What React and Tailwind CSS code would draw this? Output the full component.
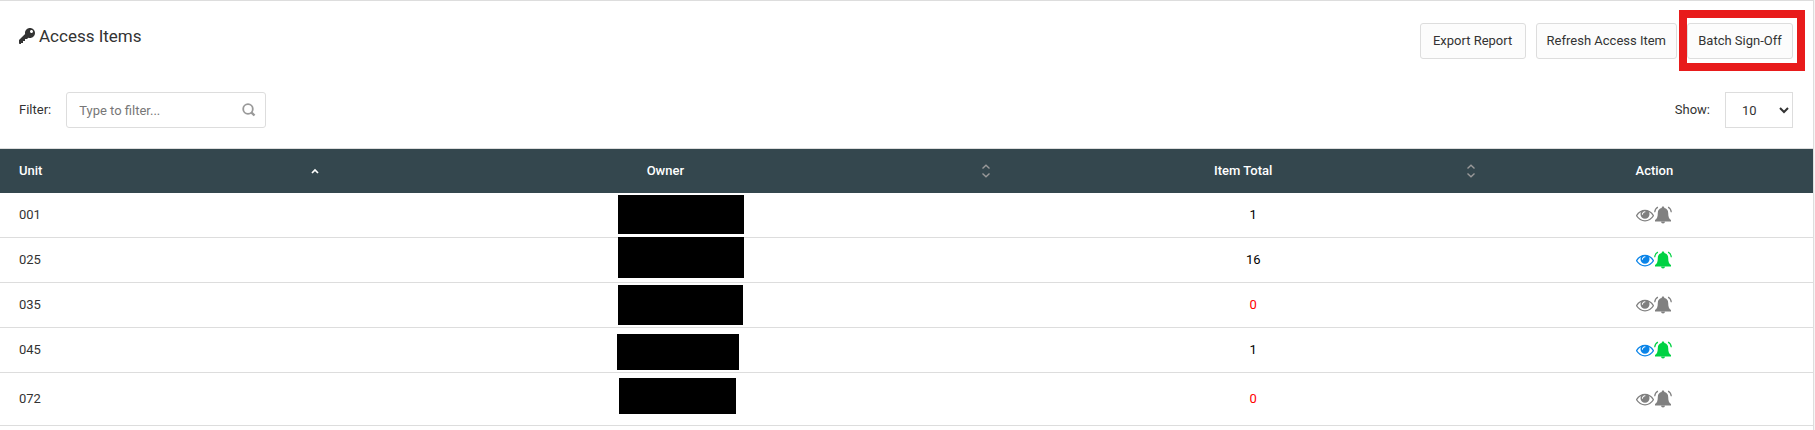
import { useState } from 'react';
import { ImKey } from 'react-icons/im';

// mask: size and position of the bar that hides the owner's name
const ROWS = [
  { unit: '001', total: 1, height: 'h-[45px]', active: false, mask: 'left-[278px] top-[2px] w-[126px] h-[39px]' },
  { unit: '025', total: 16, height: 'h-[45px]', active: true, mask: 'left-[278px] top-[-1px] w-[126px] h-[41px]' },
  { unit: '035', total: 0, height: 'h-[45px]', active: false, mask: 'left-[278px] top-[2px] w-[125px] h-[40px]' },
  { unit: '045', total: 1, height: 'h-[45px]', active: true, mask: 'left-[277px] top-[6px] w-[122px] h-[36px]' },
  { unit: '072', total: 0, height: 'h-[53px]', active: false, mask: 'left-[279px] top-[5px] w-[117px] h-[36px]' },
];

function SearchIcon() {
  return (
    <svg viewBox="0 0 14 14" className="absolute right-[10px] top-[11px] h-[14px] w-[14px] text-[#999999]" fill="none" stroke="currentColor" aria-hidden="true">
      <circle cx="6" cy="6" r="4.8" strokeWidth="1.8" />
      <path d="M9.3 9.3L12.5 12.5" strokeWidth="2.4" />
    </svg>
  );
}

function EyeIcon() {
  return (
    <svg viewBox="0 0 1792 1792" className="h-[18px] w-[18px]" fill="currentColor" aria-hidden="true">
      <path d="M1664 960q-152-236-381-353 61 104 61 225 0 185-131.5 316.5t-316.5 131.5-316.5-131.5-131.5-316.5q0-121 61-225-229 117-381 353 133 205 333.5 326.5t434.5 121.5 434.5-121.5 333.5-326.5zm-720-384q0-20-14-34t-34-14q-125 0-214.5 89.5t-89.5 214.5q0 20 14 34t34 14 34-14 14-34q0-86 61-147t147-61q20 0 34-14t14-34zm848 384q0 34-20 69-140 230-376.5 368.5t-499.5 138.5-499.5-139-376.5-368q-20-35-20-69t20-69q140-229 376.5-368t499.5-139 499.5 139 376.5 368q20 35 20 69z" />
    </svg>
  );
}

function BellIcon() {
  return (
    <svg viewBox="0 0 18 18" className="h-[18px] w-[18px]" fill="currentColor" aria-hidden="true">
      <path d="M9 .5c.8 0 1.300.5 1.300 1.200v.3c2.500.5 3.900 2.300 3.900 4.900 0 4 .8 5.800 2.800 7.100v1.500H1V14c2-1.300 2.800-3.100 2.800-7.100 0-2.600 1.400-4.400 3.900-4.900v-.3C7.700 1 8.200.5 9 .5z" />
      <path d="M7 15.500h4a2 2 0 0 1-4 0z" />
      <path d="M3.900 1.100C2.100 2 .9 3.900.7 6.200M14.100 1.100c1.800.9 3 2.800 3.200 5.100" fill="none" stroke="currentColor" strokeWidth="1.200" />
    </svg>
  );
}

function SortIcon({ sorted }) {
  return (
    <svg viewBox="0 0 16 16" className="absolute right-[17px] top-[14px] h-4 w-4" fill="none" aria-hidden="true">
      {sorted ? (
        <path d="M5 10l3-3 3 3" stroke="#ffffff" strokeWidth="1.7" />
      ) : (
        <path d="M4.500 5.500L8 2.300l3.500 3.200M4.500 10.500L8 13.700l3.500-3.200" stroke="#999999" strokeWidth="1.400" />
      )}
    </svg>
  );
}

function HeaderButton({ children }) {
  return (
    <button type="button" className="h-9 min-w-[106px] rounded-[3px] border border-[#dddddd] bg-[#fcfcfc] px-[10px] whitespace-nowrap hover:bg-gray-100">
      {children}
    </button>
  );
}

export default function App() {
  const [filter, setFilter] = useState('');
  const rows = ROWS.filter((r) => r.unit.includes(filter.trim()));

  return (
    <div className="bg-[#f5f5f5] pr-px font-['Roboto',sans-serif] text-[13px] leading-5 text-[#333333]">
      <div className="min-h-screen border-t border-r border-[#dddddd] bg-white">
        <div className="flex items-start justify-between pt-[22px] pr-5 pl-[19px]">
          <h1 className="flex items-center gap-1 text-[17px] leading-[26px]">
            <ImKey className="h-4 w-4" aria-hidden="true" />
            Access Items
          </h1>
          <div className="flex gap-[10px]">
            <HeaderButton>Export Report</HeaderButton>
            <HeaderButton>Refresh Access Item</HeaderButton>
            <div className="relative">
              <HeaderButton>Batch Sign-Off</HeaderButton>
              <div className="pointer-events-none absolute -top-[13px] -right-3 -bottom-3 -left-2 border-8 border-[#e81b1b]" />
            </div>
          </div>
        </div>

        <div className="flex items-center justify-between pt-[33px] pr-5 pb-5 pl-[19px]">
          <div className="flex items-center">
            <label htmlFor="filter" className="mr-[15px]">Filter:</label>
            <div className="relative">
              <input
                id="filter"
                type="text"
                value={filter}
                onChange={(e) => setFilter(e.target.value)}
                placeholder="Type to filter..."
                className="block h-9 w-[200px] rounded-[3px] border border-[#dddddd] pr-9 pl-3 placeholder:text-[#777777]"
              />
              <SearchIcon />
            </div>
          </div>
          <div className="flex items-center">
            <label htmlFor="show" className="mr-[15px]">Show:</label>
            <select id="show" className="h-9 w-[68px] border border-[#dddddd] bg-white pl-3">
              <option>10</option>
              <option>25</option>
              <option>50</option>
            </select>
          </div>
        </div>

        <table className="w-full table-fixed border-separate border-spacing-0 border-t border-[#dddddd]">
          <thead className="bg-[#34474e] text-white">
            <tr className="h-[44px]">
              <th className="relative w-[18.75%] pr-10 pl-[19px] text-left font-medium">Unit<SortIcon sorted /></th>
              <th className="relative w-[37%] pr-10 pl-5 text-center font-medium">Owner<SortIcon /></th>
              <th className="relative w-[26.75%] pr-10 pl-5 text-center font-medium">Item Total<SortIcon /></th>
              <th className="px-5 text-center font-medium">Action</th>
            </tr>
          </thead>
          <tbody>
            {rows.map((r) => (
              <tr key={r.unit} className={r.height}>
                <td className="border-b border-[#dddddd] pl-[19px]">{r.unit}</td>
                <td className="relative border-b border-[#dddddd]">
                  <span className={`absolute bg-black ${r.mask}`} />
                </td>
                <td className={`border-b border-[#dddddd] text-center ${r.total === 0 ? 'text-[#ff0000]' : 'text-black'}`}>
                  {r.total}
                </td>
                <td className="border-b border-[#dddddd]">
                  <div className="flex items-center justify-center">
                    <button type="button" aria-label={`View ${r.unit}`} className={r.active ? 'text-[#0a84e8]' : 'text-[#808080]'}>
                      <EyeIcon />
                    </button>
                    <button type="button" aria-label={`Notify ${r.unit}`} className={r.active ? 'text-[#00d243]' : 'text-[#808080]'}>
                      <BellIcon />
                    </button>
                  </div>
                </td>
              </tr>
            ))}
          </tbody>
        </table>
      </div>
    </div>
  );
}
